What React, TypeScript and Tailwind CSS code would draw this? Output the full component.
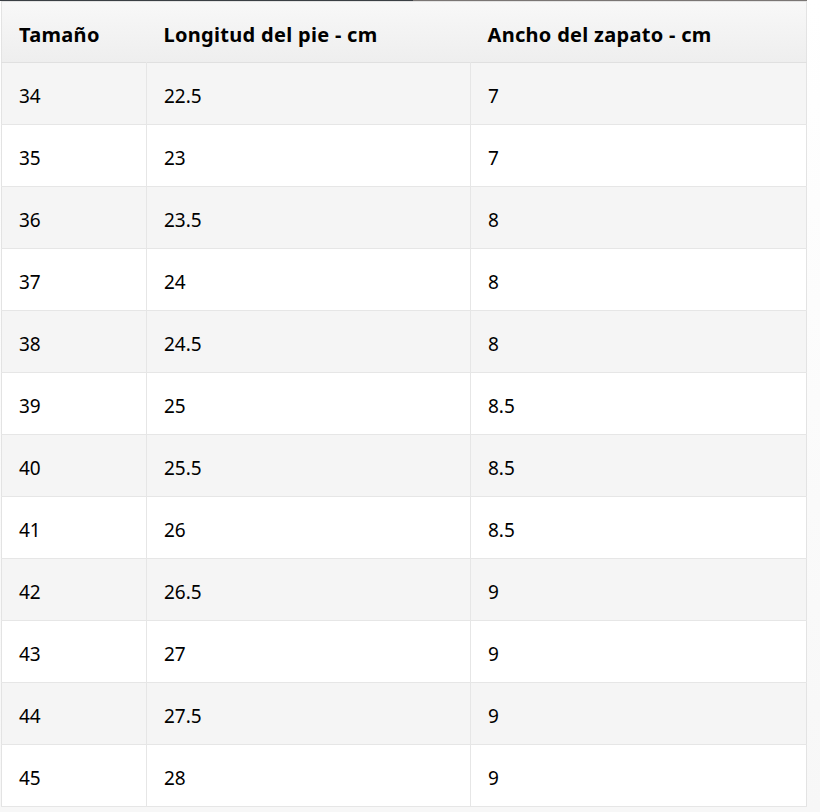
import React from 'react';

const rows: [string, string, string][] = [
  ['34', '22.5', '7'],
  ['35', '23', '7'],
  ['36', '23.5', '8'],
  ['37', '24', '8'],
  ['38', '24.5', '8'],
  ['39', '25', '8.5'],
  ['40', '25.5', '8.5'],
  ['41', '26', '8.5'],
  ['42', '26.5', '9'],
  ['43', '27', '9'],
  ['44', '27.5', '9'],
  ['45', '28', '9'],
];

const App = () => {
  return (
    <div className="min-h-screen bg-gradient-to-b from-white to-[#f7f7f7] font-['Noto_Sans','Open_Sans',sans-serif] text-black">
      {/* thin top rule */}
      <div className="flex h-px">
        <div className="w-[413px] bg-[#3a3f44]"></div>
        <div className="w-[394px] bg-[#7a7674]"></div>
      </div>
      <div className="pl-px">
        <table className="w-[806px] border-collapse table-fixed border border-[#e3e3e3] text-[19px]">
          <colgroup>
            <col className="w-[145px]" />
            <col className="w-[324px]" />
            <col />
          </colgroup>
          <thead>
            <tr className="h-[61px] bg-gradient-to-b from-[#f8f8f8] to-[#eeeeee] border-b border-[#e0e0e0] text-[20px] tracking-[0.3px]">
              <th className="pl-[17px] pt-[5px] text-left font-bold">Tamaño</th>
              <th className="pl-[17px] pt-[5px] text-left font-bold">Longitud del pie - cm</th>
              <th className="pl-[17px] pt-[5px] text-left font-bold">Ancho del zapato - cm</th>
            </tr>
          </thead>
          <tbody>
            {rows.map((r, i) => (
              <tr key={r[0]} className={`h-[62px] border-b border-[#e6e6e6] ${i % 2 === 0 ? 'bg-[#f5f5f5]' : 'bg-white'}`}>
                <td className="pl-[17px] pt-[6px] border-r border-[#e6e6e6]">{r[0]}</td>
                <td className="pl-[17px] pt-[6px] border-r border-[#e6e6e6]">{r[1]}</td>
                <td className="pl-[17px] pt-[6px]">{r[2]}</td>
              </tr>
            ))}
          </tbody>
        </table>
      </div>
    </div>
  );
};

export default App;
